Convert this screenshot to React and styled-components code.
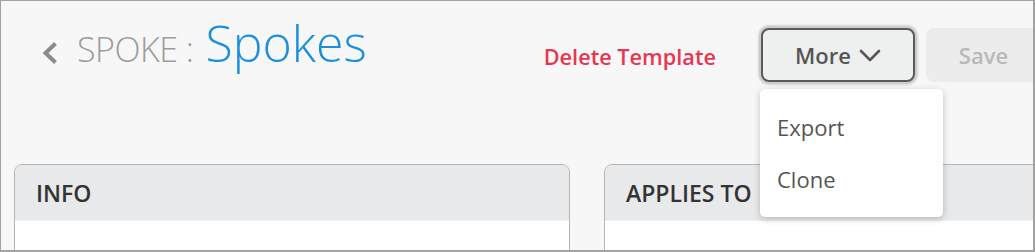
import React from "react"
import styled, { createGlobalStyle } from "styled-components"

const GlobalStyle = createGlobalStyle`
  html, body {
    margin: 0;
    padding: 0;
    background: #ffffff;
    font-family: "Open Sans", "Noto Sans", sans-serif;
  }
`

const Frame = styled.div`
  box-sizing: border-box;
  width: 1035px;
  height: 252px;
  border: 1px solid #a2a2a2;
  border-right-width: 2px;
  border-bottom-width: 2px;
  background: #f7f7f7;
  overflow: hidden;
`

const Header = styled.div`
  display: flex;
  align-items: center;
  height: 54px;
  padding-top: 27px;
  margin-right: -8px;
`

const TitleGroup = styled.div`
  flex: 1;
  display: flex;
  align-items: baseline;
  padding-left: 40px;
  margin-top: -20px;
`

const BackIcon = styled.svg`
  flex-shrink: 0;
  width: 17px;
  height: 24px;
  margin-right: 19px;
  align-self: center;
  position: relative;
  top: 8px;
`

const Crumb = styled.span`
  font-size: 34px;
  font-weight: 300;
  color: #9c9c9c;
  margin-right: 12px;
  letter-spacing: -0.5px;
`

const PageTitle = styled.span`
  font-size: 50px;
  font-weight: 300;
  color: #1b8fdf;
  line-height: 1;
`

const DangerLink = styled.a`
  font-size: 21.7px;
  font-weight: 600;
  color: #e73552;
  text-decoration: none;
  margin-right: 45px;
  margin-top: 3px;
`

const MenuWrap = styled.div`
  position: relative;
  margin-right: 11px;
`

const Button = styled.button`
  box-sizing: border-box;
  display: flex;
  align-items: center;
  justify-content: center;
  gap: 8px;
  width: ${p => p.$width}px;
  height: 54px;
  border-radius: 8px;
  font-family: inherit;
  font-size: 22px;
  font-weight: 600;
  padding: 0;
  border: ${p => (p.$focused ? "2px solid #5a5a5a" : "2px solid #ececec")};
  background: ${p => (p.$focused ? "#eeefef" : "#ececec")};
  color: ${p => (p.$focused ? "#565656" : "#b9b9b9")};
  box-shadow: ${p => (p.$focused ? "0 0 0 2px #cdcdcd, 0 0 2px 3px #d6d6d6" : "none")};
`

const Menu = styled.ul`
  position: absolute;
  left: -1px;
  top: 61px;
  width: 183px;
  margin: 0;
  padding: 12px 0;
  list-style: none;
  background: #ffffff;
  border-radius: 5px;
  box-shadow: 0 2px 7px rgba(0, 0, 0, 0.22);
  z-index: 2;
`

const MenuItem = styled.li`
  padding: 11px 17px;
  font-size: 22px;
  line-height: 30px;
  color: #555555;
`

const Panels = styled.div`
  display: flex;
  gap: 34px;
  margin-top: 82px;
  padding-left: 13px;
`

const Panel = styled.div`
  flex: 0 0 556px;
  box-sizing: border-box;
  height: 120px;
  border: 1px solid #b5b5b5;
  border-radius: 8px 8px 0 0;
  background: #ffffff;
  overflow: hidden;
`

const PanelHeader = styled.div`
  display: flex;
  align-items: center;
  height: 55px;
  padding: 0 21px;
  background: #e8e9ea;
  font-size: 23px;
  font-weight: 600;
  color: #333333;
  border-bottom: 1px solid #eeeeee;
`

const ChevronDown = () => (
  <svg width="22" height="13" viewBox="0 0 22 13" fill="none">
    <polyline points="2,2 11,11 20,2" stroke="#565656" strokeWidth="2.6" strokeLinecap="round" strokeLinejoin="round" />
  </svg>
)

export default function App() {
  return (
    <>
      <GlobalStyle />
      <Frame>
        <Header>
          <TitleGroup>
            <BackIcon viewBox="0 0 17 24" fill="none">
              <polyline points="14.5,2.5 4.5,12 14.5,21.5" stroke="#8a8a8a" strokeWidth="4" strokeLinejoin="miter" />
            </BackIcon>
            <Crumb>SPOKE :</Crumb>
            <PageTitle>Spokes</PageTitle>
          </TitleGroup>
          <DangerLink href="#">Delete Template</DangerLink>
          <MenuWrap>
            <Button $focused $width={154}>
              More <ChevronDown />
            </Button>
            <Menu>
              <MenuItem>Export</MenuItem>
              <MenuItem>Clone</MenuItem>
            </Menu>
          </MenuWrap>
          <Button $width={115}>Save</Button>
        </Header>
        <Panels>
          <Panel>
            <PanelHeader>INFO</PanelHeader>
          </Panel>
          <Panel>
            <PanelHeader>APPLIES TO</PanelHeader>
          </Panel>
        </Panels>
      </Frame>
    </>
  )
}
